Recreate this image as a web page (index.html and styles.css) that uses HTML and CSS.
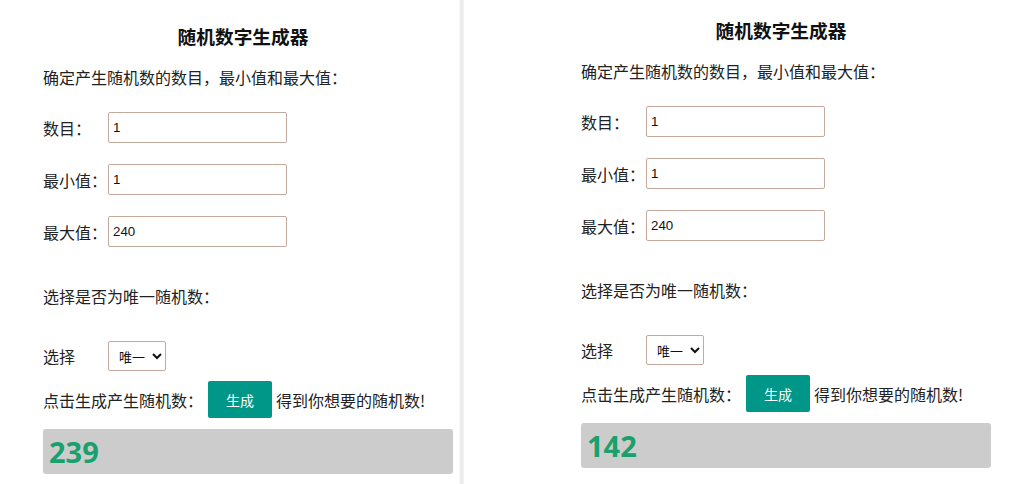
FILE: index.html
```html
<!DOCTYPE html>
<html lang="zh-CN">
<head>
    <meta charset="UTF-8">
    <meta name="viewport" content="width=device-width, initial-scale=1.0">
    <title>随机数字生成器</title>
    <link rel="stylesheet" href="styles.css">
</head>
<body>
    <div class="screens">
        <div class="panel panel-left">
            <div class="app">
                <h3 class="title">随机数字生成器</h3>
                <p class="intro">确定产生随机数的数目，最小值和最大值：</p>
                <div class="field">
                    <label class="field-label">数目：</label>
                    <input class="field-input" type="text" value="1">
                </div>
                <div class="field">
                    <label class="field-label">最小值：</label>
                    <input class="field-input" type="text" value="1">
                </div>
                <div class="field">
                    <label class="field-label">最大值：</label>
                    <input class="field-input" type="text" value="240">
                </div>
                <p class="section">选择是否为唯一随机数：</p>
                <div class="choose">
                    <label class="field-label">选择</label>
                    <select class="choose-select">
                        <option>唯一</option>
                        <option>不唯一</option>
                    </select>
                </div>
                <div class="generate">
                    <span>点击生成产生随机数：</span>
                    <button class="generate-button" onclick="generate(this)">生成</button>
                    <span>得到你想要的随机数!</span>
                </div>
                <div class="result">239</div>
            </div>
        </div>
        <div class="divider"></div>
        <div class="panel panel-right">
            <div class="app">
                <h3 class="title">随机数字生成器</h3>
                <p class="intro">确定产生随机数的数目，最小值和最大值：</p>
                <div class="field">
                    <label class="field-label">数目：</label>
                    <input class="field-input" type="text" value="1">
                </div>
                <div class="field">
                    <label class="field-label">最小值：</label>
                    <input class="field-input" type="text" value="1">
                </div>
                <div class="field">
                    <label class="field-label">最大值：</label>
                    <input class="field-input" type="text" value="240">
                </div>
                <p class="section">选择是否为唯一随机数：</p>
                <div class="choose">
                    <label class="field-label">选择</label>
                    <select class="choose-select">
                        <option>唯一</option>
                        <option>不唯一</option>
                    </select>
                </div>
                <div class="generate">
                    <span>点击生成产生随机数：</span>
                    <button class="generate-button" onclick="generate(this)">生成</button>
                    <span>得到你想要的随机数!</span>
                </div>
                <div class="result">142</div>
            </div>
        </div>
    </div>
    <script>
        function generate(btn) {
            const app = btn.closest('.app');
            const inputs = app.querySelectorAll('.field-input');
            const min = parseInt(inputs[1].value, 10) || 0;
            const max = parseInt(inputs[2].value, 10) || 0;
            const n = Math.floor(Math.random() * (max - min + 1)) + min;
            app.querySelector('.result').textContent = n;
        }
    </script>
</body>
</html>
```

FILE: styles.css
```css
* {
    box-sizing: border-box;
    margin: 0;
    padding: 0;
}
body {
    font-family: "Noto Sans CJK SC", "Liberation Sans", sans-serif;
    font-size: 16px;
    color: #222;
    background-color: #fff;
}
.screens {
    display: flex;
    height: 484px;
    overflow: hidden;
}
.panel {
    flex-shrink: 0;
}
.panel-left {
    width: 459px;
    padding-left: 43px;
    padding-top: 24px;
}
.panel-right {
    flex: 1;
    padding-left: 117px;
    padding-top: 18px;
}
.divider {
    width: 5px;
    flex-shrink: 0;
    background: linear-gradient(to right, #fafafa, #e9e9e9 50%, #f5f5f5);
}
.app {
    width: 410px;
}
.title {
    font-size: 18.7px;
    line-height: 24px;
    font-weight: bold;
    text-align: center;
    padding-right: 10px;
    color: #111;
}
.intro {
    margin-top: 18px;
    line-height: 22px;
}
.field {
    display: flex;
    align-items: center;
    margin-top: 21px;
}
.intro + .field {
    margin-top: 24px;
}
.field-label {
    width: 65px;
    flex-shrink: 0;
}
.field-input {
    width: 179px;
    height: 31px;
    border: 1px solid #c3aa9c;
    border-radius: 2px;
    padding: 0 4px;
    font-family: "Liberation Sans", Arial, sans-serif;
    font-size: 13.33px;
    color: #111;
    outline: none;
}
.section {
    margin-top: 38px;
    line-height: 22px;
}
.choose {
    display: flex;
    align-items: center;
    margin-top: 34px;
}
.choose-select {
    width: 58px;
    height: 30px;
    border: 1px solid #c3aa9c;
    border-radius: 2px;
    background-color: #fff;
    padding-left: 6px;
    font-family: "Noto Sans CJK SC", sans-serif;
    font-size: 13px;
    color: #111;
}
.generate {
    display: flex;
    align-items: center;
    margin-top: 10px;
}
.generate-button {
    width: 64px;
    height: 37px;
    margin: 0 4px 0 5px;
    border: none;
    border-radius: 2px;
    background-color: #009688;
    color: #fff;
    font-family: "Noto Sans CJK SC", sans-serif;
    font-size: 14px;
    cursor: pointer;
}
.result {
    margin-top: 11px;
    height: 45px;
    padding-left: 6px;
    background-color: #cccccc;
    border-radius: 3px;
    font-family: "Open Sans", sans-serif;
    font-size: 29px;
    font-weight: bold;
    line-height: 45px;
    color: #19a06d;
}
```
